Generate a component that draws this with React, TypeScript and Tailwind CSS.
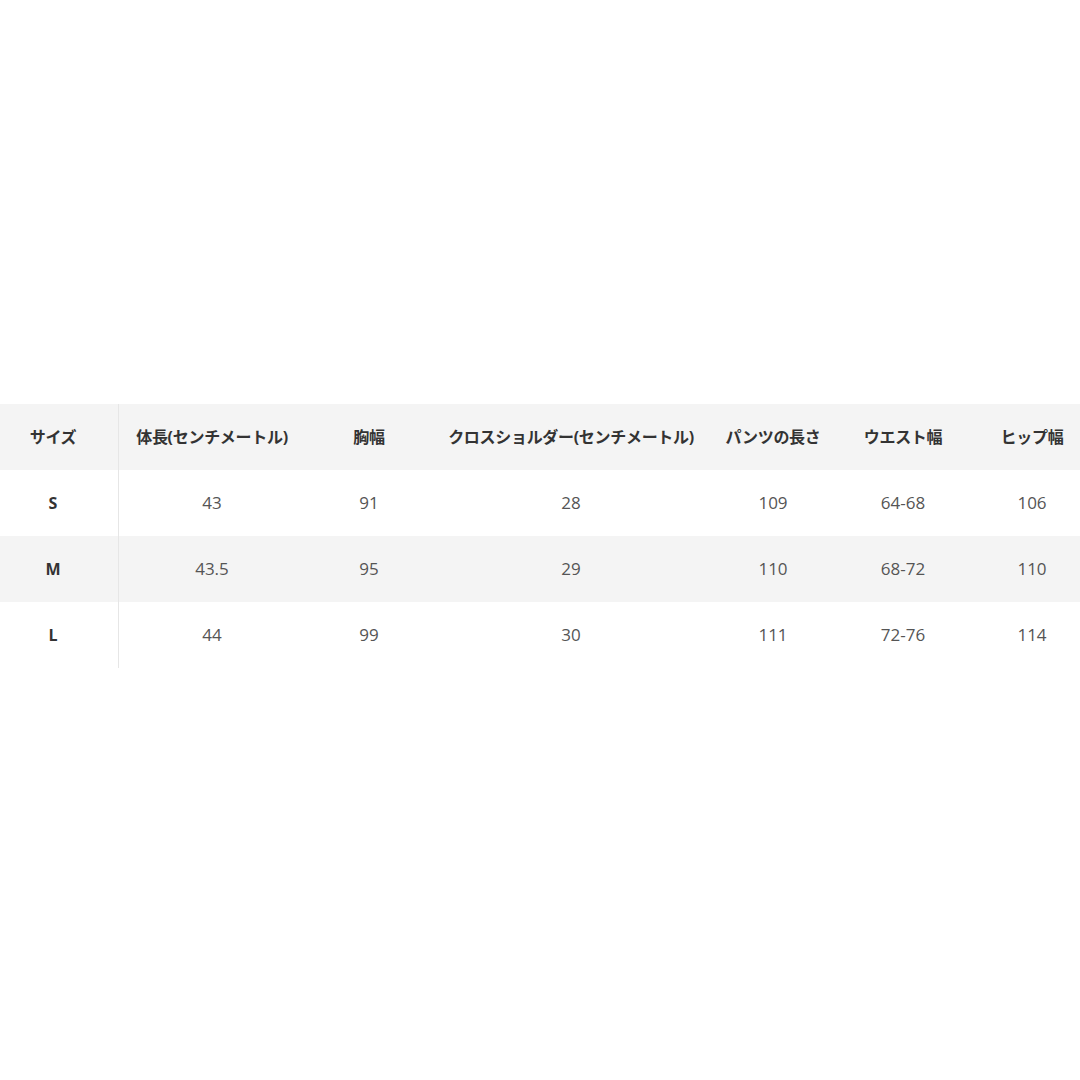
import React from "react";

const headers = [
  "サイズ",
  "体長(センチメートル)",
  "胸幅",
  "クロスショルダー(センチメートル)",
  "パンツの長さ",
  "ウエスト幅",
  "ヒップ幅",
];

const rows = [
  ["S", "43", "91", "28", "109", "64-68", "106"],
  ["M", "43.5", "95", "29", "110", "68-72", "110"],
  ["L", "44", "99", "30", "111", "72-76", "114"],
];

const cols = "grid-cols-[119px_186px_128px_276px_128px_132px_126px]";

export default function App() {
  return (
    <div
      className="w-[1080px] h-[1080px] bg-white overflow-hidden pt-[404px]"
      style={{ fontFamily: '"Open Sans", "Noto Sans CJK JP", sans-serif' }}
    >
      <div className={`grid ${cols} w-[1095px] h-[66px] bg-[#f4f4f4] text-[16px] font-bold text-[#333]`}>
        {headers.map((h, i) => (
          <div
            key={i}
            className={`flex items-center justify-center whitespace-nowrap tracking-[-0.3px] ${i === 0 ? "border-r border-[#e6e6e6] pr-[12px]" : ""}`}
          >
            {h}
          </div>
        ))}
      </div>
      {rows.map((r, ri) => (
        <div
          key={ri}
          className={`grid ${cols} w-[1095px] h-[66px] text-[17px] text-[#555] ${ri === 1 ? "bg-[#f4f4f4]" : "bg-white"}`}
        >
          {r.map((c, i) => (
            <div
              key={i}
              className={`flex items-center justify-center ${i === 0 ? "border-r border-[#e6e6e6] font-bold text-[#333] text-[16px] pr-[12px]" : ""}`}
            >
              {c}
            </div>
          ))}
        </div>
      ))}
    </div>
  );
}
